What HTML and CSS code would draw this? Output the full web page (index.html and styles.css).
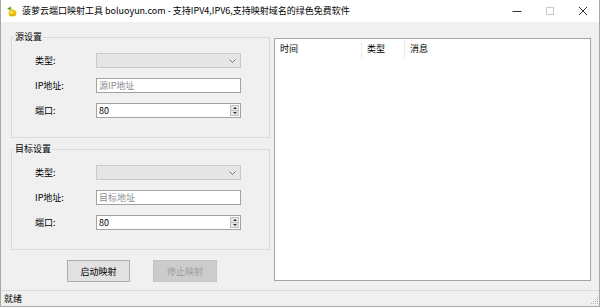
FILE: index.html
```html
<!doctype html>
<html lang="zh-CN">
<head>
<meta charset="UTF-8" />
<title>菠萝云端口映射工具</title>
<link rel="stylesheet" href="styles.css">
</head>
<body>

<div class="window">
	<div class="titlebar">
		<svg class="app-icon" width="11" height="11" viewBox="0 0 11 11">
			<path d="M1 3 L4 1 L5 4 Z" fill="#3a9a2a"/>
			<path d="M3 0 L6 2 L4 4 Z" fill="#6cbf3a"/>
			<ellipse cx="6.5" cy="7" rx="4" ry="3.6" fill="#f3c10f"/>
			<ellipse cx="5.5" cy="6.3" rx="1.6" ry="1.2" fill="#fbe06a"/>
			<path d="M3.5 9 Q6.5 11 10 8" stroke="#d79a00" stroke-width="0.8" fill="none"/>
		</svg>
		<span class="title">菠萝云端口映射工具 boluoyun.com - 支持IPV4,IPV6,支持映射域名的绿色免费软件</span>
		<div class="caption">
			<span class="cap-btn"><svg width="10" height="10" viewBox="0 0 10 10"><path d="M0.5 5.5 H9.5" stroke="#333" stroke-width="1"/></svg></span>
			<span class="cap-btn"><svg width="10" height="10" viewBox="0 0 10 10"><rect x="1.5" y="1.5" width="7" height="7" stroke="#c8c8c8" fill="none"/></svg></span>
			<span class="cap-btn"><svg width="10" height="10" viewBox="0 0 10 10"><path d="M1 1 L9 9 M9 1 L1 9" stroke="#333" stroke-width="1"/></svg></span>
		</div>
	</div>

	<div class="client">
		<div class="left">
			<div class="group">
				<span class="group-title">源设置</span>
				<div class="row">
					<label>类型:</label>
					<div class="combo"><svg width="7" height="4" viewBox="0 0 7 4"><path d="M0.5 0.5 L3.5 3.5 L6.5 0.5" stroke="#777" fill="none"/></svg></div>
				</div>
				<div class="row">
					<label>IP地址:</label>
					<input class="textbox" type="text" placeholder="源IP地址">
				</div>
				<div class="row">
					<label>端口:</label>
					<div class="spin">
						<input class="textbox" type="text" value="80">
						<span class="spin-btns"><i class="up"></i><i class="down"></i></span>
					</div>
				</div>
			</div>

			<div class="group">
				<span class="group-title">目标设置</span>
				<div class="row">
					<label>类型:</label>
					<div class="combo"><svg width="7" height="4" viewBox="0 0 7 4"><path d="M0.5 0.5 L3.5 3.5 L6.5 0.5" stroke="#777" fill="none"/></svg></div>
				</div>
				<div class="row">
					<label>IP地址:</label>
					<input class="textbox" type="text" placeholder="目标地址">
				</div>
				<div class="row">
					<label>端口:</label>
					<div class="spin">
						<input class="textbox" type="text" value="80">
						<span class="spin-btns"><i class="up"></i><i class="down"></i></span>
					</div>
				</div>
			</div>

			<div class="buttons">
				<button class="btn">启动映射</button>
				<button class="btn" disabled>停止映射</button>
			</div>
		</div>

		<div class="log">
			<div class="log-head">
				<span class="col col-time">时间</span>
				<span class="col col-type">类型</span>
				<span class="col col-msg">消息</span>
			</div>
		</div>
	</div>

	<div class="statusbar">
		<span class="status-text">就绪</span>
		<svg class="grip" width="9" height="9" viewBox="0 0 9 9">
			<rect x="7" y="1" width="1" height="1" fill="#b5b5b5"/>
			<rect x="5" y="3" width="1" height="1" fill="#b5b5b5"/>
			<rect x="7" y="3" width="1" height="1" fill="#b5b5b5"/>
			<rect x="3" y="5" width="1" height="1" fill="#b5b5b5"/>
			<rect x="5" y="5" width="1" height="1" fill="#b5b5b5"/>
			<rect x="7" y="5" width="1" height="1" fill="#b5b5b5"/>
			<rect x="1" y="7" width="1" height="1" fill="#b5b5b5"/>
			<rect x="3" y="7" width="1" height="1" fill="#b5b5b5"/>
			<rect x="5" y="7" width="1" height="1" fill="#b5b5b5"/>
			<rect x="7" y="7" width="1" height="1" fill="#b5b5b5"/>
		</svg>
	</div>
</div>

</body>
</html>
```

FILE: styles.css
```css
html,body{margin:0;padding:0;}
*{box-sizing:border-box;}

body{
	font-family: "Noto Sans CJK SC", "Noto Sans", sans-serif;
	font-size: 9px;
	color: #000;
	background: #f0f0f0;
}

.window{
	width: 600px;
	height: 307px;
	border: 1px solid #a8a8a8;
	border-top: none;
	background: #f0f0f0;
	display: flex;
	flex-direction: column;
}

/* 标题栏 */
.titlebar{
	height: 22px;
	background: #fff;
	display: flex;
	align-items: center;
}
.app-icon{
	margin-left: 5px;
	margin-right: 5px;
	margin-top: 1px;
}
.title{
	font-size: 9px;
	line-height: 12px;
	color: #000;
	white-space: nowrap;
	flex: 1;
}
.caption{
	display: flex;
	height: 100%;
}
.cap-btn{
	width: 33px;
	height: 100%;
	display: flex;
	align-items: center;
	justify-content: center;
}

/* 主体 */
.client{
	height: 268px;
	display: flex;
}
.left{
	width: 273px;
	padding-left: 10px;
}

.group{
	position: relative;
	width: 259px;
	height: 101px;
	margin-top: 15px;
	border: 1px solid #dadada;
	padding-top: 15px;
}
.group + .group{
	margin-top: 11px;
}
.group-title{
	position: absolute;
	top: -7px;
	left: 2px;
	padding: 0 1px;
	line-height: 12px;
	background: #f0f0f0;
}

.row{
	display: flex;
	align-items: center;
	height: 15px;
	margin-bottom: 10px;
}
.row label{
	width: 84px;
	padding-left: 23px;
	line-height: 15px;
}

.combo{
	width: 145px;
	height: 15px;
	border: 1px solid #c9c9c9;
	background: #e5e5e5;
	display: flex;
	align-items: center;
	justify-content: flex-end;
	padding-right: 4px;
}

.textbox{
	width: 145px;
	height: 15px;
	margin: 0;
	padding: 0 2px;
	border: 1px solid #a2a2a2;
	background: #fff;
	font-family: "Noto Sans CJK SC", "Noto Sans", sans-serif;
	font-size: 9px;
	color: #000;
	outline: none;
}
.textbox::placeholder{
	color: #8c8c8c;
}

.spin{
	position: relative;
	width: 145px;
	height: 15px;
}
.spin-btns{
	position: absolute;
	right: 2px;
	top: 2px;
	width: 9px;
	height: 11px;
	display: flex;
	flex-direction: column;
}
.spin-btns i{
	flex: 1;
	background: #e6e6e6;
	border: 1px solid #c2c2c2;
	position: relative;
}
.spin-btns i + i{
	border-top: none;
}
.spin-btns i:after{
	content: '';
	position: absolute;
	left: 2px;
	border-left: 2px solid transparent;
	border-right: 2px solid transparent;
}
.spin-btns .up:after{
	top: 1px;
	border-bottom: 2px solid #333;
}
.spin-btns .down:after{
	top: 1px;
	border-top: 2px solid #333;
}

.buttons{
	display: flex;
	gap: 23px;
	padding-left: 56px;
	margin-top: 10px;
}
.btn{
	width: 63px;
	height: 22px;
	padding: 0;
	border: 1px solid #adadad;
	background: #e1e1e1;
	font-family: "Noto Sans CJK SC", "Noto Sans", sans-serif;
	font-size: 9px;
	color: #000;
}
.btn + .btn{
	width: 64px;
}
.btn:disabled{
	background: #cccccc;
	border-color: #c4c4c4;
	color: #9c9c9c;
}

/* 日志列表 */
.log{
	width: 317px;
	height: 243px;
	margin-top: 16px;
	border: 1px solid #a5a5a5;
	background: #fff;
}
.log-head{
	display: flex;
	height: 19px;
}
.col{
	line-height: 19px;
	padding-left: 5px;
	border-right: 1px solid #ececec;
}
.col-time{ width: 87px; }
.col-type{ width: 43px; }
.col-msg{ flex: 1; border-right: none; }

/* 状态栏 */
.statusbar{
	height: 16px;
	border-top: 1px solid #dadada;
	display: flex;
	align-items: center;
	justify-content: space-between;
	padding-left: 3px;
}
.status-text{
	line-height: 12px;
	margin-top: 1px;
}
.grip{
	margin-top: 4px;
}
```
